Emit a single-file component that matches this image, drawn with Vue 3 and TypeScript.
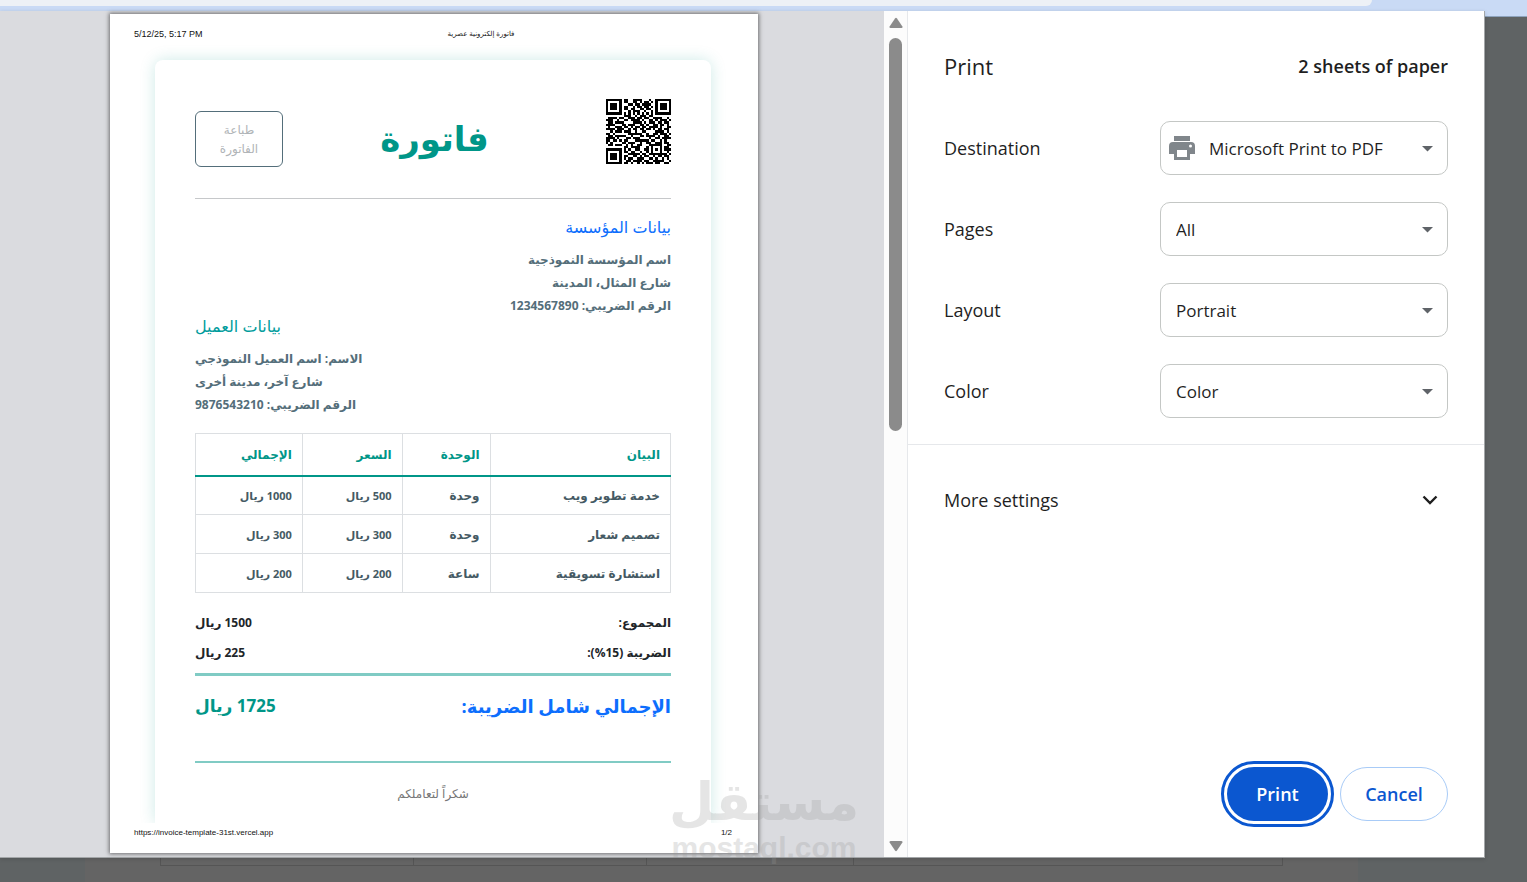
<script setup lang="ts">
import { ref } from 'vue'

interface Item {
  name: string
  unit: string
  price: string
  total: string
}

interface Setting {
  id: string
  label: string
  options: string[]
  printer?: boolean
}

const items: Item[] = [
  { name: 'خدمة تطوير ويب', unit: 'وحدة', price: '500 ريال', total: '1000 ريال' },
  { name: 'تصميم شعار', unit: 'وحدة', price: '300 ريال', total: '300 ريال' },
  { name: 'استشارة تسويقية', unit: 'ساعة', price: '200 ريال', total: '200 ريال' },
]

const settings: Setting[] = [
  { id: 'destination', label: 'Destination', options: ['Microsoft Print to PDF'], printer: true },
  { id: 'pages', label: 'Pages', options: ['All'] },
  { id: 'layout', label: 'Layout', options: ['Portrait'] },
  { id: 'color', label: 'Color', options: ['Color'] },
]

const values = ref<Record<string, string>>(
  Object.fromEntries(settings.map((s) => [s.id, s.options[0]])),
)

const qrRows: string[] = [
  '11111110110011110001001111111',
  '10000010110011010110101000001',
  '10111010001101101111001011101',
  '10111010110010110110101011101',
  '10111010110110011011001011101',
  '10000010001011100100101000001',
  '11111110101010101010101111111',
  '00000000111001011101100000000',
  '01111011001110110110011110010',
  '11100100110111101001101011101',
  '01101111000011110101110110110',
  '11110001101110011010011011010',
  '01001110110101101101111010011',
  '11110111001011011011010110110',
  '00101110111001001100001111010',
  '11010000001111110010011011101',
  '01101111100100011011110100110',
  '11110100011011100001001101111',
  '11011010110001111110110010100',
  '10100001101110010011001110110',
  '01101110010100110001111110011',
  '00000000110111100010100010110',
  '11111110101001100110101010111',
  '10000010110110010010100010010',
  '10111010001111101101111111101',
  '10111010110011010110010110110',
  '10111010101100111001101001010',
  '10000010011011110110011111001',
  '11111110110100101011101100110',
]

const qrPath = qrRows
  .map((row, y) =>
    [...row].map((c, x) => (c === '1' ? `M${x} ${y}h1v1h-1z` : '')).join(''),
  )
  .join('')
</script>

<template>
  <div class="screen">
    <header class="chrome"><div class="tab"></div></header>

    <main class="dialog">
      <section class="preview" aria-label="Print preview">
        <article class="paper">
          <div class="running top">
            <span class="stamp">5/12/25, 5:17 PM</span>
            <span class="doc-title" dir="rtl">فاتورة إلكترونية عصرية</span>
            <span></span>
          </div>

          <div class="clip">
            <div class="card" dir="rtl">
              <div class="head">
                <svg class="qr" viewBox="0 0 29 29" shape-rendering="crispEdges" role="img" aria-label="QR">
                  <path :d="qrPath" fill="#000" />
                </svg>
                <h1>فاتورة</h1>
                <button type="button" class="print-invoice">طباعة الفاتورة</button>
              </div>

              <section class="party seller">
                <h2>بيانات المؤسسة</h2>
                <p>اسم المؤسسة النموذجية</p>
                <p>شارع المثال، المدينة</p>
                <p>الرقم الضريبي: 1234567890</p>
              </section>
              <section class="party client">
                <h2>بيانات العميل</h2>
                <p>الاسم: اسم العميل النموذجي</p>
                <p>شارع آخر، مدينة أخرى</p>
                <p>الرقم الضريبي: 9876543210</p>
              </section>

              <table>
                <colgroup>
                  <col class="c-name" />
                  <col class="c-unit" />
                  <col class="c-price" />
                  <col class="c-total" />
                </colgroup>
                <thead>
                  <tr>
                    <th>البيان</th>
                    <th>الوحدة</th>
                    <th>السعر</th>
                    <th>الإجمالي</th>
                  </tr>
                </thead>
                <tbody>
                  <tr v-for="item in items" :key="item.name">
                    <td>{{ item.name }}</td>
                    <td>{{ item.unit }}</td>
                    <td class="money">{{ item.price }}</td>
                    <td class="money">{{ item.total }}</td>
                  </tr>
                </tbody>
              </table>

              <div class="sums">
                <div class="sum"><span>المجموع:</span><span>1500 ريال</span></div>
                <div class="sum"><span>الضريبة (15%):</span><span>225 ريال</span></div>
              </div>
              <div class="grand"><span class="grand-label">الإجمالي شامل الضريبة:</span><span>1725 ريال</span></div>
              <p class="thanks">شكراً لتعاملكم</p>
            </div>
          </div>

          <div class="running bottom">
            <span>https://invoice-template-31st.vercel.app</span>
            <span>1/2</span>
          </div>
        </article>
      </section>

      <div class="scrollbar" aria-hidden="true">
        <svg width="16" height="12" viewBox="0 0 16 12"><path d="M7 1.500q1-1.300 2 0l5.400 8q.6 1.500-1 1.500H2.600q-1.600 0-1-1.500z" fill="#8b8b8b" /></svg>
        <div class="track"><div class="thumb"></div></div>
        <svg width="16" height="12" viewBox="0 0 16 12"><path d="M7 10.500q1 1.300 2 0l5.400-8q.6-1.500-1-1.500H2.600q-1.600 0-1 1.500z" fill="#8b8b8b" /></svg>
      </div>

      <aside class="side">
        <div class="side-head">
          <h2>Print</h2>
          <span>2 sheets of paper</span>
        </div>

        <div class="settings">
          <div v-for="s in settings" :key="s.id" class="setting">
            <label :for="s.id">{{ s.label }}</label>
            <div class="field">
              <svg v-if="s.printer" class="printer" width="26" height="24" viewBox="0 0 26 24">
                <path fill="#80868b" fill-rule="evenodd" d="M5 0h16v5H5zM4 6h18a4 4 0 0 1 4 4v8h-5v6H5v-6H0v-8a4 4 0 0 1 4-4zM8 14v7h10v-7zM21.500 8.500a1.500 1.500 0 1 0 0 3 1.500 1.500 0 0 0 0-3z" />
              </svg>
              <select :id="s.id" v-model="values[s.id]" :class="{ 'with-icon': s.printer }">
                <option v-for="o in s.options" :key="o" :value="o">{{ o }}</option>
              </select>
              <svg class="caret" width="11" height="6" viewBox="0 0 11 6"><path d="M0 0h11L5.500 5.500z" fill="#5f6368" /></svg>
            </div>
          </div>
        </div>

        <button type="button" class="more">
          <span>More settings</span>
          <svg width="16" height="10" viewBox="0 0 16 10"><path d="M1.500 1.500L8 8l6.500-6.500" fill="none" stroke="#1f1f1f" stroke-width="2.400" /></svg>
        </button>

        <div class="actions">
          <button type="button" class="primary">Print</button>
          <button type="button" class="secondary">Cancel</button>
        </div>
      </aside>

      <div class="watermark" aria-hidden="true">
        <span class="wm-ar" dir="rtl">مستقل</span>
        <span class="wm-en">mostaql.com</span>
      </div>
    </main>

    <footer class="behind">
      <div class="sheet">
        <div class="grid"><i></i><i></i><i></i><i></i></div>
      </div>
    </footer>
  </div>
</template>

<style>
body {
  margin: 0;
  background: #5f6364;
}
</style>

<style scoped>
* {
  box-sizing: border-box;
}
h1,
h2,
p {
  margin: 0;
  font-weight: 400;
}
button,
select {
  font: inherit;
  color: inherit;
}
.screen {
  display: flex;
  flex-direction: column;
  min-height: 100vh;
  overflow: hidden;
  background: #5f6364;
  font-family: 'Open Sans', 'DejaVu Sans', sans-serif;
}
.chrome {
  height: 17px;
  background: #c9daf5;
  border-bottom: 1px solid #8ea3bd;
}
.tab {
  height: 6px;
  margin-right: 155px;
  background: #edf1f6;
  border-radius: 0 0 14px 0;
}
.dialog {
  position: relative;
  flex: 1;
  display: flex;
  margin: -6px 42px 0 0;
  background: #fff;
  border: solid #a3a6a8;
  border-width: 0 1px 1px 0;
  box-shadow: 0 1px 4px rgba(0, 0, 0, 0.15);
}
.preview {
  flex: 1;
  display: flex;
  justify-content: center;
  padding: 3px 16px 4px 0;
  background: #dadbdf;
}
.paper {
  display: flex;
  flex-direction: column;
  width: 648px;
  background: #fff;
  box-shadow: 0 0 4px 1px rgba(0, 0, 0, 0.5);
}
.running {
  display: flex;
  justify-content: space-between;
  padding: 0 26px 0 24px;
  color: #111;
  font: 8px/12px 'Liberation Sans', 'DejaVu Sans', sans-serif;
}
.running.top {
  display: grid;
  grid-template-columns: 1fr auto 1fr;
  padding-top: 14px;
}
.stamp {
  font-size: 9px;
}
.doc-title {
  padding-left: 96px;
  font-size: 7px;
}
.clip {
  flex: 1;
  padding: 20px 47px 0 45px;
  overflow: hidden;
}
.card {
  height: 100%;
  min-height: 762px;
  padding: 38px 40px 0;
  border-radius: 8px 8px 0 0;
  background: #fff;
  box-shadow: 0 0 16px rgba(0, 150, 136, 0.2);
  color: #546e7a;
  font-weight: 700;
  font-size: 12px;
}
.head {
  display: flex;
  justify-content: space-between;
  height: 101px;
  border-bottom: 1px solid #c6c8ca;
}
.qr {
  width: 65px;
  height: 65px;
  margin-top: 1px;
}
h1 {
  margin-right: 20px;
  color: #009688;
  font-size: 34px;
  line-height: 80px;
  font-weight: 700;
}
.print-invoice {
  width: 88px;
  height: 56px;
  margin-top: 13px;
  padding: 0 16px;
  border: 1px solid #546e7a;
  border-radius: 6px;
  background: #fff;
  color: #b0b4b7;
  font-size: 12px;
  line-height: 19px;
  font-weight: 400;
}
.party h2 {
  padding-bottom: 12px;
  font-size: 16px;
  line-height: 18px;
}
.party p {
  font-size: 12px;
  line-height: 23px;
  font-weight: 700;
}
.seller {
  padding-top: 19px;
}
.seller h2 {
  color: #0d6efd;
}
.client {
  text-align: left;
}
.client h2 {
  color: #009c9c;
}
table {
  width: 100%;
  margin-top: 17px;
  border-collapse: collapse;
  table-layout: fixed;
  color: #455a64;
}
.c-name {
  width: 38%;
}
.c-unit {
  width: 18.5%;
}
.c-price {
  width: 21%;
}
.c-total {
  width: 22.5%;
}
th,
td {
  height: 39px;
  padding: 0 10px;
  border: 1px solid #dcdfe2;
  text-align: right;
}
th {
  height: 42px;
  border-bottom: 2px solid #009688;
  color: #009688;
}
.money {
  font-size: 11px;
}
.sums {
  padding: 15px 0 5px;
  border-bottom: 3px solid #80cbc4;
  color: #212529;
}
.sum,
.grand {
  display: flex;
  justify-content: space-between;
  line-height: 30px;
}
.grand {
  height: 87px;
  padding-top: 15px;
  border-bottom: 2px solid #80cbc4;
  color: #009688;
  font-size: 17px;
}
.grand-label {
  color: #0d6efd;
  font-size: 18px;
}
.thanks {
  padding-top: 21px;
  color: #777;
  font-size: 12px;
  line-height: 20px;
  text-align: center;
}
.running.bottom {
  height: 30px;
  padding-top: 4px;
}
.scrollbar {
  flex: none;
  display: flex;
  flex-direction: column;
  align-items: center;
  width: 23px;
  padding: 6px 0 5px;
  background: #fcfcfc;
}
.track {
  flex: 1;
  padding-top: 9px;
}
.thumb {
  width: 13px;
  height: 49%;
  border-radius: 7px;
  background: #8b8b8b;
}
.side {
  flex: none;
  display: flex;
  flex-direction: column;
  width: 577px;
  border-left: 1px solid #e6e8eb;
  color: #1f1f1f;
  font-size: 18px;
}
.side-head {
  display: flex;
  align-items: center;
  justify-content: space-between;
  height: 110px;
  padding: 0 36px;
  font-weight: 600;
}
.side-head h2 {
  font-size: 22px;
}
.settings {
  display: grid;
  gap: 27px;
  padding: 0 36px 26px;
  border-bottom: 1px solid #e6e8eb;
}
.setting {
  display: flex;
  align-items: center;
  justify-content: space-between;
}
.field {
  position: relative;
  width: 288px;
}
select {
  display: block;
  width: 100%;
  height: 54px;
  padding: 0 40px 0 15px;
  appearance: none;
  border: 1px solid #c4c7c5;
  border-radius: 10px;
  background: #fff;
  font-size: 17px;
}
select.with-icon {
  padding-left: 48px;
}
.printer {
  position: absolute;
  left: 9px;
  top: 15px;
}
.caret {
  position: absolute;
  right: 15px;
  top: 25px;
}
.more {
  display: flex;
  align-items: center;
  justify-content: space-between;
  height: 110px;
  padding: 0 46px 0 36px;
  border: 0;
  background: none;
}
.actions {
  display: flex;
  justify-content: flex-end;
  gap: 12px;
  margin-top: auto;
  padding: 0 36px 36px;
  font-weight: 600;
}
.actions button {
  height: 54px;
  border-radius: 27px;
}
.primary {
  width: 101px;
  border: 0;
  background: #0b57d0;
  color: #fff;
  outline: 3px solid #0b57d0;
  outline-offset: 3px;
}
.secondary {
  width: 108px;
  border: 1px solid #a8cbf7;
  background: #fff;
  color: #0b57d0;
}
.watermark {
  position: absolute;
  right: 628px;
  bottom: -8px;
  display: flex;
  flex-direction: column;
  align-items: center;
  width: 184px;
  color: #999;
  opacity: 0.25;
  font-weight: 700;
  white-space: nowrap;
  pointer-events: none;
}
.wm-ar {
  font-size: 52px;
  line-height: 62px;
}
.wm-en {
  font: 700 30px/34px 'Liberation Sans', sans-serif;
}
.behind {
  height: 24px;
  padding: 0 169px 0 85px;
}
.sheet {
  height: 100%;
  padding: 0 75px;
  background: #646464;
}
.grid {
  display: grid;
  grid-template-columns: 252fr 234fr 207fr 430fr;
  height: 8px;
  border: solid #555;
  border-width: 0 1px 1px;
}
.grid i + i {
  border-left: 1px solid #555;
}
</style>
